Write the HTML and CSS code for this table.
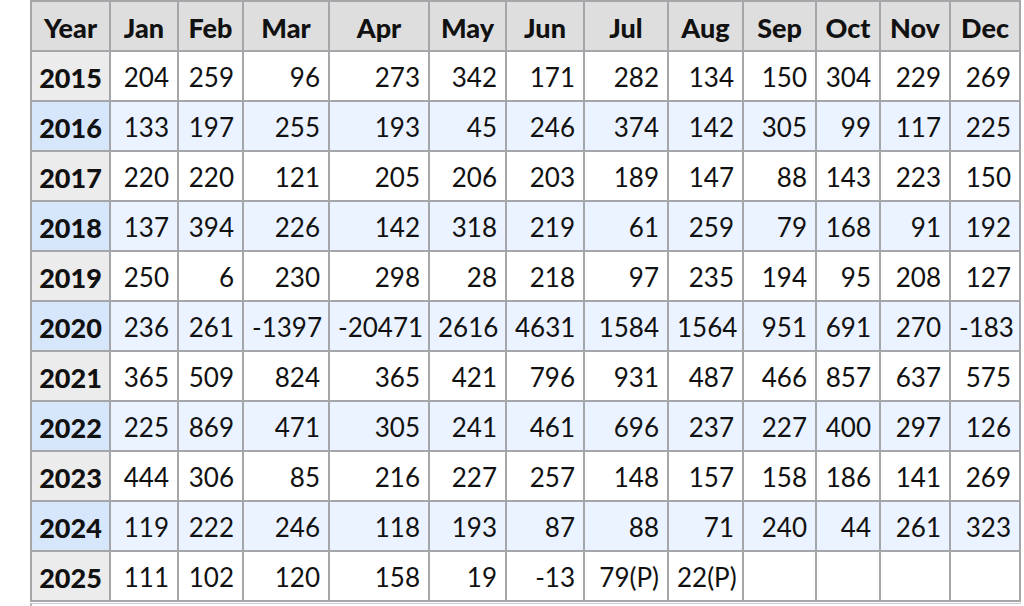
FILE: index.html
```html
<!DOCTYPE html>
<html lang="en">
<head>
<meta charset="utf-8">
<title>Monthly data</title>
<link rel="stylesheet" href="styles.css">
</head>
<body>
<table class="data">
  <thead>
    <tr>
      <th class="c-year">Year</th>
      <th class="c-jan">Jan</th>
      <th class="c-feb">Feb</th>
      <th class="c-mar">Mar</th>
      <th class="c-apr">Apr</th>
      <th class="c-may">May</th>
      <th class="c-jun">Jun</th>
      <th class="c-jul">Jul</th>
      <th class="c-aug">Aug</th>
      <th class="c-sep">Sep</th>
      <th class="c-oct">Oct</th>
      <th class="c-nov">Nov</th>
      <th class="c-dec">Dec</th>
    </tr>
  </thead>
  <tbody>
    <tr><th>2015</th><td>204</td><td>259</td><td>96</td><td>273</td><td>342</td><td>171</td><td>282</td><td>134</td><td>150</td><td>304</td><td>229</td><td>269</td></tr>
    <tr class="hl"><th>2016</th><td>133</td><td>197</td><td>255</td><td>193</td><td>45</td><td>246</td><td>374</td><td>142</td><td>305</td><td>99</td><td>117</td><td>225</td></tr>
    <tr><th>2017</th><td>220</td><td>220</td><td>121</td><td>205</td><td>206</td><td>203</td><td>189</td><td>147</td><td>88</td><td>143</td><td>223</td><td>150</td></tr>
    <tr class="hl"><th>2018</th><td>137</td><td>394</td><td>226</td><td>142</td><td>318</td><td>219</td><td>61</td><td>259</td><td>79</td><td>168</td><td>91</td><td>192</td></tr>
    <tr><th>2019</th><td>250</td><td>6</td><td>230</td><td>298</td><td>28</td><td>218</td><td>97</td><td>235</td><td>194</td><td>95</td><td>208</td><td>127</td></tr>
    <tr class="hl"><th>2020</th><td>236</td><td>261</td><td>-1397</td><td>-20471</td><td>2616</td><td>4631</td><td>1584</td><td>1564</td><td>951</td><td>691</td><td>270</td><td>-183</td></tr>
    <tr><th>2021</th><td>365</td><td>509</td><td>824</td><td>365</td><td>421</td><td>796</td><td>931</td><td>487</td><td>466</td><td>857</td><td>637</td><td>575</td></tr>
    <tr class="hl"><th>2022</th><td>225</td><td>869</td><td>471</td><td>305</td><td>241</td><td>461</td><td>696</td><td>237</td><td>227</td><td>400</td><td>297</td><td>126</td></tr>
    <tr><th>2023</th><td>444</td><td>306</td><td>85</td><td>216</td><td>227</td><td>257</td><td>148</td><td>157</td><td>158</td><td>186</td><td>141</td><td>269</td></tr>
    <tr class="hl"><th>2024</th><td>119</td><td>222</td><td>246</td><td>118</td><td>193</td><td>87</td><td>88</td><td>71</td><td>240</td><td>44</td><td>261</td><td>323</td></tr>
    <tr><th>2025</th><td>111</td><td>102</td><td>120</td><td>158</td><td>19</td><td>-13</td><td>79(P)</td><td>22(P)</td><td></td><td></td><td></td><td></td></tr>
  </tbody>
</table>
<div class="after"></div>
</body>
</html>
```

FILE: styles.css
```css
html, body {
  margin: 0;
  padding: 0;
  background: #ffffff;
}

body {
  font-family: Lato, "Noto Sans", "Liberation Sans", sans-serif;
  font-size: 26px;
  color: #111111;
  overflow: hidden;
}

.data {
  margin-left: 30px;
  border-collapse: separate;
  border-spacing: 0;
  table-layout: fixed;
  width: 991px;
  box-sizing: border-box;
  border-left: 2px solid #a4a6a9;
  border-top: 2px solid #a4a6a9;
}

.data th,
.data td {
  box-sizing: border-box;
  height: 50px;
  padding: 2px 8px 0;
  border-right: 2px solid #a4a6a9;
  border-bottom: 2px solid #a4a6a9;
  vertical-align: middle;
  white-space: nowrap;
  line-height: 1;
}

.data td {
  text-align: right;
  background: #ffffff;
}

.data th {
  font-weight: 900;
  font-size: 27px;
  text-align: center;
  background: #ececec;
  padding: 2px 2px 0;
}

.data thead th {
  background: #dedede;
}

.data tr.hl td {
  background: #eaf3ff;
}

.data tr.hl th {
  background: #d6e6fb;
}

.c-year { width: 79px; }
.c-jan { width: 68px; }
.c-feb { width: 65px; }
.c-mar { width: 86px; }
.c-apr { width: 100px; }
.c-may { width: 77px; }
.c-jun { width: 78px; }
.c-jul { width: 84px; }
.c-aug { width: 75px; }
.c-sep { width: 73px; }
.c-oct { width: 64px; }
.c-nov { width: 70px; }
.c-dec { width: 70px; }

.after {
  margin-left: 30px;
  width: 991px;
  height: 20px;
  box-sizing: border-box;
  margin-top: 1px;
  border-left: 2px solid #b4b6b9;
  border-top: 1px solid #c8cacd;
}
```
